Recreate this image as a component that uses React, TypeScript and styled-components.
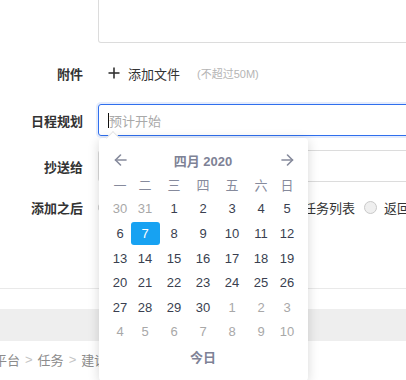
import React from "react";
import styled, { createGlobalStyle } from "styled-components";

const GlobalStyle = createGlobalStyle`
  html, body { margin: 0; padding: 0; background: #fff; }
  body {
    width: 406px; height: 380px; overflow: hidden;
    font-family: "Liberation Sans", "Noto Sans CJK SC", sans-serif;
  }
  * { box-sizing: border-box; }
`;

const Page = styled.div`
  width: 406px;
  height: 380px;
  overflow: hidden;
  position: relative;
`;

const FormSection = styled.div`
  padding-bottom: 70px;
  border-bottom: 1px solid #e9e9e9;
`;

const Row = styled.div<{ $top: number; $h: number }>`
  display: flex;
  align-items: center;
  gap: 15px;
  margin-top: ${(p) => p.$top}px;
  height: ${(p) => p.$h}px;
`;

const Label = styled.div`
  width: 83px;
  flex: none;
  text-align: right;
  font-family: "Noto Sans CJK SC", sans-serif;
  font-weight: 700;
  font-size: 13px;
  color: #333;
`;

const Field = styled.div`
  width: 340px;
  flex: none;
  height: 100%;
  position: relative;
  display: flex;
  align-items: center;
`;

const TextArea = styled.div`
  width: 100%;
  height: 100%;
  border: 1px solid #dcdcdc;
  border-top: none;
  border-radius: 0 0 0 3px;
`;

const AddFile = styled.div`
  display: flex;
  align-items: center;
  padding-left: 10px;
  font-family: "Noto Sans CJK SC", sans-serif;
  font-size: 13px;
  color: #333;
  gap: 8px;
`;

const Hint = styled.span`
  margin-left: 9px;
  font-size: 11px;
  color: #b5b5b5;
  font-family: "Liberation Sans", "Noto Sans CJK SC", sans-serif;
`;

const Input = styled.div<{ $focus?: boolean }>`
  width: 100%;
  height: 100%;
  border: 1px solid ${(p) => (p.$focus ? "#2f6fed" : "#dcdcdc")};
  border-radius: 3px;
  box-shadow: ${(p) => (p.$focus ? "0 0 0 2px rgba(47,111,237,0.13)" : "none")};
  display: flex;
  align-items: center;
  padding-left: 9px;
`;

const Caret = styled.span`
  width: 1px;
  height: 15px;
  background: #111;
`;

const Placeholder = styled.span`
  font-family: "Noto Sans CJK SC", sans-serif;
  font-size: 13px;
  color: #a9a9a9;
`;

const RadioGroup = styled.div`
  display: flex;
  align-items: center;
  gap: 9px;
`;

const RadioItem = styled.label`
  display: flex;
  align-items: center;
  gap: 7px;
  font-family: "Noto Sans CJK SC", sans-serif;
  font-size: 13px;
  color: #333;
  white-space: nowrap;
`;

const RadioDot = styled.span`
  width: 13px;
  height: 13px;
  border-radius: 50%;
  border: 1px solid #c9c9c9;
  background: #efefef;
  flex: none;
`;

const Popup = styled.div`
  position: absolute;
  left: 1px;
  top: 34px;
  width: 209px;
  height: 243px;
  background: #fff;
  border-radius: 4px;
  box-shadow: 0 2px 12px rgba(0, 0, 0, 0.16);
  padding: 10px 8px 10px 9px;
  z-index: 5;
  &::before {
    content: "";
    position: absolute;
    left: 9px;
    top: -5px;
    width: 9px;
    height: 9px;
    background: #fff;
    transform: rotate(45deg);
    border-left: 1px solid #e6e6e6;
    border-top: 1px solid #e6e6e6;
  }
`;

const CalGrid = styled.div<{ $row: number }>`
  display: grid;
  grid-template-columns: 24px 26px 32px 26px 32px 26px 26px;
  grid-auto-rows: ${(p) => p.$row}px;
  align-items: center;
  justify-items: center;
`;

const NavArrow = styled.span`
  display: flex;
  color: #868a9c;
`;

const Title = styled.div`
  grid-column: 2 / 7;
  font-family: "Liberation Sans", "Noto Sans CJK SC", sans-serif;
  font-weight: 700;
  font-size: 13px;
  color: #7e8296;
`;

const Week = styled.div`
  font-family: "Noto Sans CJK SC", sans-serif;
  font-size: 13px;
  color: #868a9c;
`;

const Day = styled.div<{ $muted?: boolean; $selected?: boolean }>`
  width: 29px;
  height: 23px;
  border-radius: 3px;
  display: flex;
  align-items: center;
  justify-content: center;
  font-size: 13px;
  color: ${(p) => (p.$selected ? "#fff" : p.$muted ? "#a8a8a8" : "#3a3f50")};
  background: ${(p) => (p.$selected ? "#17a2f2" : "transparent")};
`;

const Today = styled.div`
  grid-column: 2 / 7;
  font-family: "Noto Sans CJK SC", sans-serif;
  font-weight: 700;
  font-size: 13px;
  color: #7e8296;
`;

const Footer = styled.div`
  margin-top: 20px;
`;

const GrayBar = styled.div`
  height: 32px;
  background: #eeeeee;
`;

const Breadcrumb = styled.div`
  height: 37px;
  display: flex;
  align-items: center;
  margin-left: -6px;
  font-family: "Noto Sans CJK SC", sans-serif;
  font-size: 13px;
  color: #8c8c8c;
  white-space: nowrap;
`;

const Sep = styled.span`
  margin: 0 5px;
  color: #c4c4c4;
  font-family: "Liberation Sans", sans-serif;
`;

const Arrow = ({ dir }: { dir: "left" | "right" }) => (
  <svg width="13" height="12" viewBox="0 0 13 12" fill="none" stroke="currentColor" strokeWidth="1.6" strokeLinecap="round" strokeLinejoin="round">
    {dir === "left" ? (
      <>
        <line x1="1.5" y1="6" x2="12" y2="6" />
        <polyline points="6.5,1 1.5,6 6.5,11" />
      </>
    ) : (
      <>
        <line x1="1" y1="6" x2="11.5" y2="6" />
        <polyline points="6.5,1 11.5,6 6.5,11" />
      </>
    )}
  </svg>
);

const Plus = () => (
  <svg width="12" height="12" viewBox="0 0 12 12" stroke="#333" strokeWidth="1.6">
    <line x1="6" y1="0.5" x2="6" y2="11.5" />
    <line x1="0.5" y1="6" x2="11.5" y2="6" />
  </svg>
);

const weeks = ["一", "二", "三", "四", "五", "六", "日"];

type Cell = { d: number; muted?: boolean; selected?: boolean };

const buildDays = (): Cell[] => {
  const cells: Cell[] = [{ d: 30, muted: true }, { d: 31, muted: true }];
  for (let i = 1; i <= 30; i++) cells.push({ d: i, selected: i === 7 });
  for (let i = 1; i <= 10; i++) cells.push({ d: i, muted: true });
  return cells;
};

export default function App() {
  const days = buildDays();
  return (
    <Page>
      <GlobalStyle />
      <FormSection>
        <Row $top={0} $h={43}>
          <Label />
          <Field>
            <TextArea />
          </Field>
        </Row>
        <Row $top={14} $h={32}>
          <Label>附件</Label>
          <Field>
            <AddFile>
              <Plus />
              <span>添加文件</span>
              <Hint>(不超过50M)</Hint>
            </AddFile>
          </Field>
        </Row>
        <Row $top={15} $h={32}>
          <Label>日程规划</Label>
          <Field>
            <Input $focus>
              <Caret />
              <Placeholder>预计开始</Placeholder>
            </Input>
            <Popup>
              <CalGrid $row={24}>
                <NavArrow>
                  <Arrow dir="left" />
                </NavArrow>
                <Title>四月 2020</Title>
                <NavArrow>
                  <Arrow dir="right" />
                </NavArrow>
              </CalGrid>
              <CalGrid $row={24.6}>
                {weeks.map((w) => (
                  <Week key={w}>{w}</Week>
                ))}
                {days.map((c, i) => (
                  <Day key={i} $muted={c.muted} $selected={c.selected}>
                    {c.d}
                  </Day>
                ))}
                <Today>今日</Today>
              </CalGrid>
            </Popup>
          </Field>
        </Row>
        <Row $top={14} $h={32}>
          <Label>抄送给</Label>
          <Field>
            <Input />
          </Field>
        </Row>
        <Row $top={14} $h={22}>
          <Label>添加之后</Label>
          <Field>
            <RadioGroup>
              <RadioItem>
                <RadioDot />
                继续创建新的任务
              </RadioItem>
              <RadioItem>
                <RadioDot />
                跳转查看任务列表
              </RadioItem>
              <RadioItem>
                <RadioDot />
                返回首页
              </RadioItem>
            </RadioGroup>
          </Field>
        </Row>
      </FormSection>
      <Footer>
        <GrayBar />
        <Breadcrumb>
          平台<Sep>&gt;</Sep>任务<Sep>&gt;</Sep>建设任务
        </Breadcrumb>
      </Footer>
    </Page>
  );
}
